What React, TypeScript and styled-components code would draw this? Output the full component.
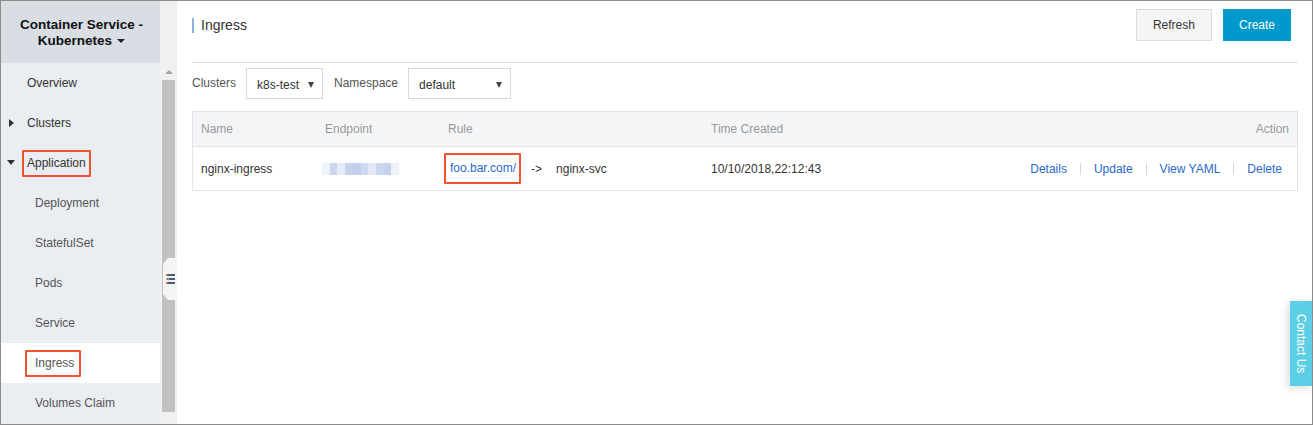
import React from "react";
import styled, { createGlobalStyle } from "styled-components";

const GlobalStyle = createGlobalStyle`
  html, body {
    margin: 0;
    padding: 0;
    background: #fff;
  }
  body {
    font-family: "Liberation Sans", Arial, sans-serif;
    font-size: 12px;
    color: #333;
  }
`;

const Frame = styled.div`
  width: 1313px;
  height: 425px;
  box-sizing: border-box;
  border: 1px solid #8c8c8c;
  display: flex;
  position: relative;
  overflow: hidden;
`;

const Sidebar = styled.div`
  width: 159px;
  display: flex;
  flex-direction: column;
  background: #eaedf1;
`;

const SideHeader = styled.div`
  height: 62px;
  background: #d9dee4;
  display: flex;
  align-items: center;
  justify-content: center;
  text-align: center;
  font-weight: bold;
  font-size: 13.5px;
  line-height: 16px;
  color: #111;
  padding: 1px 0 0 2px;
  box-sizing: border-box;
`;

const Caret = styled.span`
  display: inline-block;
  width: 0;
  height: 0;
  border-left: 4px solid transparent;
  border-right: 4px solid transparent;
  border-top: 4px solid #222;
  margin-left: 5px;
  vertical-align: 2px;
`;

const MenuItem = styled.div<{ $sub?: boolean; $active?: boolean }>`
  height: 40px;
  display: flex;
  align-items: center;
  position: relative;
  padding-left: ${(p) => (p.$sub ? 34 : 26)}px;
  background: ${(p) => (p.$active ? "#fff" : "transparent")};
  color: ${(p) => (p.$sub ? "#555" : "#333")};
  font-size: 12px;
`;

const Arrow = styled.span<{ $open?: boolean }>`
  position: absolute;
  left: 8px;
  top: 50%;
  width: 0;
  height: 0;
  ${(p) =>
    p.$open
      ? `border-left: 4px solid transparent;
         border-right: 4px solid transparent;
         border-top: 5px solid #333;
         margin-top: -3px;
         left: 6px;`
      : `border-top: 4px solid transparent;
         border-bottom: 4px solid transparent;
         border-left: 5px solid #333;
         margin-top: -4px;`}
`;

const Highlight = styled.span<{ $pl: number; $pr: number }>`
  border: 2px solid #f0532f;
  padding: 5px ${(p) => p.$pr}px 5px ${(p) => p.$pl}px;
  margin-left: ${(p) => -(p.$pl + 2)}px;
  border-radius: 1px;
  line-height: 13px;
`;

const ScrollCol = styled.div`
  width: 17px;
  background: #f0f0f0;
  display: flex;
  flex-direction: column;
  align-items: center;
  padding-top: 62px;
  box-sizing: border-box;
  position: relative;
`;

const ScrollUp = styled.div`
  height: 17px;
  width: 100%;
  display: flex;
  align-items: center;
  justify-content: center;
  &::after {
    content: "";
    border-left: 4px solid transparent;
    border-right: 4px solid transparent;
    border-bottom: 4px solid #a3a3a3;
  }
`;

const Thumb = styled.div`
  width: 13px;
  height: 332px;
  background: #c1c1c1;
`;

const Handle = styled.div`
  position: absolute;
  left: 3px;
  top: 257px;
  width: 14px;
  height: 42px;
  background: #f4f4f4;
  clip-path: polygon(35% 0, 100% 0, 100% 100%, 35% 100%, 0 86%, 0 14%);
  display: flex;
  align-items: center;
  justify-content: center;
`;

const Main = styled.div`
  flex: 1;
  padding: 0 14px 0 14px;
  margin-left: 1px;
  display: flex;
  flex-direction: column;
`;

const TopBar = styled.div`
  height: 61px;
  border-bottom: 1px solid #e1e1e1;
  display: flex;
  align-items: flex-start;
  justify-content: space-between;
`;

const Title = styled.div`
  margin-top: 17px;
  border-left: 2px solid #88b4dc;
  padding-left: 7px;
  font-size: 14px;
  line-height: 15px;
  color: #333;
`;

const Buttons = styled.div`
  display: flex;
  gap: 11px;
  margin-top: 8px;
  margin-right: 7px;
`;

const Button = styled.button<{ $primary?: boolean }>`
  height: 32px;
  box-sizing: border-box;
  padding: 0 ${(p) => (p.$primary ? 15 : 16)}px;
  font-family: inherit;
  font-size: 12px;
  border: 1px solid ${(p) => (p.$primary ? "#0099cc" : "#dcdcdc")};
  background: ${(p) => (p.$primary ? "#0099cc" : "#f5f5f5")};
  color: ${(p) => (p.$primary ? "#fff" : "#333")};
  border-radius: 0;
`;

const Filters = styled.div`
  display: flex;
  align-items: center;
  height: 31px;
  margin-top: 5px;
  color: #555;
`;

const Label = styled.span`
  margin-right: 10px;
  margin-top: -2px;
`;

const Select = styled.div<{ $w: number }>`
  width: ${(p) => p.$w}px;
  height: 31px;
  box-sizing: border-box;
  border: 1px solid #d9d9d9;
  display: flex;
  align-items: center;
  justify-content: space-between;
  padding: 2px 8px 0 10px;
  margin-right: 11px;
  color: #333;
  &::after {
    content: "";
    border-left: 3px solid transparent;
    border-right: 3px solid transparent;
    border-top: 6px solid #444;
  }
`;

const Table = styled.div`
  margin-top: 12px;
  border: 1px solid #e1e4e8;
`;

const Row = styled.div<{ $head?: boolean }>`
  display: grid;
  grid-template-columns: 124px 123px 263px 1fr 300px;
  align-items: center;
  height: ${(p) => (p.$head ? 34 : 43)}px;
  padding: 0 8px;
  background: ${(p) => (p.$head ? "#f4f5f7" : "#fff")};
  color: ${(p) => (p.$head ? "#999" : "#333")};
  border-bottom: ${(p) => (p.$head ? "1px solid #e1e4e8" : "none")};
`;

const Right = styled.div<{ $pr?: number }>`
  display: flex;
  justify-content: flex-end;
  align-items: center;
  padding-right: ${(p) => p.$pr ?? 0}px;
`;

const Link = styled.a`
  color: #2868c8;
  text-decoration: none;
`;

const Sep = styled.span`
  display: inline-block;
  width: 1px;
  height: 12px;
  background: #d6d6d6;
  margin: 0 13px;
`;

const Blur = styled.div`
  display: flex;
  height: 12px;
  width: 77px;
  margin-left: -3px;
`;

const BlurCell = styled.div<{ $c: string }>`
  flex: 1;
  background: ${(p) => p.$c};
`;

const RuleCell = styled.div`
  display: flex;
  align-items: center;
`;

const RuleBox = styled.span`
  border: 2px solid #f0532f;
  padding: 7px 3px 7px 4px;
  margin-left: -4px;
  border-radius: 1px;
  line-height: 13px;
`;

const Arrowhead = styled.span`
  margin-left: 10px;
`;

const Target = styled.span`
  margin-left: 14px;
`;

const Contact = styled.div`
  position: absolute;
  right: 0;
  top: 300px;
  width: 22px;
  height: 85px;
  background: #5ccfe6;
  color: #fff;
  writing-mode: vertical-rl;
  display: flex;
  align-items: center;
  justify-content: center;
  font-size: 12px;
  box-shadow: -2px 2px 8px rgba(0, 0, 0, 0.15);
`;

const blurColors = [
  "#eef2f9",
  "#cbd6ee",
  "#e6ecf7",
  "#c6d2ec",
  "#c2cfeb",
  "#cfd9f0",
  "#e3e9f6",
  "#ccd7ee",
  "#c5d1ec",
  "#eef2f9",
];

export default function App() {
  const subs = ["Deployment", "StatefulSet", "Pods", "Service"];
  return (
    <>
      <GlobalStyle />
      <Frame>
        <Sidebar>
          <SideHeader>
            <div>
              Container Service -
              <br />
              Kubernetes
              <Caret />
            </div>
          </SideHeader>
          <MenuItem>Overview</MenuItem>
          <MenuItem>
            <Arrow />
            Clusters
          </MenuItem>
          <MenuItem>
            <Arrow $open />
            <Highlight $pl={3} $pr={3}>
              Application
            </Highlight>
          </MenuItem>
          {subs.map((s) => (
            <MenuItem $sub key={s}>
              {s}
            </MenuItem>
          ))}
          <MenuItem $sub $active>
            <Highlight $pl={8} $pr={5}>
              Ingress
            </Highlight>
          </MenuItem>
          <MenuItem $sub>Volumes Claim</MenuItem>
        </Sidebar>
        <ScrollCol>
          <ScrollUp />
          <Thumb />
          <Handle>
            <svg width="9" height="12" viewBox="0 0 9 12">
              <rect x="0" y="1" width="9" height="2" fill="#4d5b6e" />
              <rect x="3" y="5" width="6" height="2" fill="#4d5b6e" />
              <rect x="0" y="9" width="9" height="2" fill="#4d5b6e" />
              <rect x="0" y="1" width="1.5" height="2" fill="#e07a4a" />
              <rect x="0" y="9" width="1.5" height="2" fill="#e07a4a" />
              <path d="M0 6 L2.5 4.5 L2.5 7.5 Z" fill="#4d5b6e" />
            </svg>
          </Handle>
        </ScrollCol>
        <Main>
          <TopBar>
            <Title>Ingress</Title>
            <Buttons>
              <Button>Refresh</Button>
              <Button $primary>Create</Button>
            </Buttons>
          </TopBar>
          <Filters>
            <Label>Clusters</Label>
            <Select $w={77}>k8s-test</Select>
            <Label>Namespace</Label>
            <Select $w={103}>default</Select>
          </Filters>
          <Table>
            <Row $head>
              <div>Name</div>
              <div>Endpoint</div>
              <div>Rule</div>
              <div>Time Created</div>
              <Right>Action</Right>
            </Row>
            <Row>
              <div>nginx-ingress</div>
              <div>
                <Blur>
                  {blurColors.map((c, i) => (
                    <BlurCell $c={c} key={i} />
                  ))}
                </Blur>
              </div>
              <RuleCell>
                <RuleBox>
                  <Link href="#">foo.bar.com/</Link>
                </RuleBox>
                <Arrowhead>-&gt;</Arrowhead>
                <Target>nginx-svc</Target>
              </RuleCell>
              <div>10/10/2018,22:12:43</div>
              <Right $pr={7}>
                <Link href="#">Details</Link>
                <Sep />
                <Link href="#">Update</Link>
                <Sep />
                <Link href="#">View YAML</Link>
                <Sep />
                <Link href="#">Delete</Link>
              </Right>
            </Row>
          </Table>
        </Main>
        <Contact>Contact Us</Contact>
      </Frame>
    </>
  );
}
